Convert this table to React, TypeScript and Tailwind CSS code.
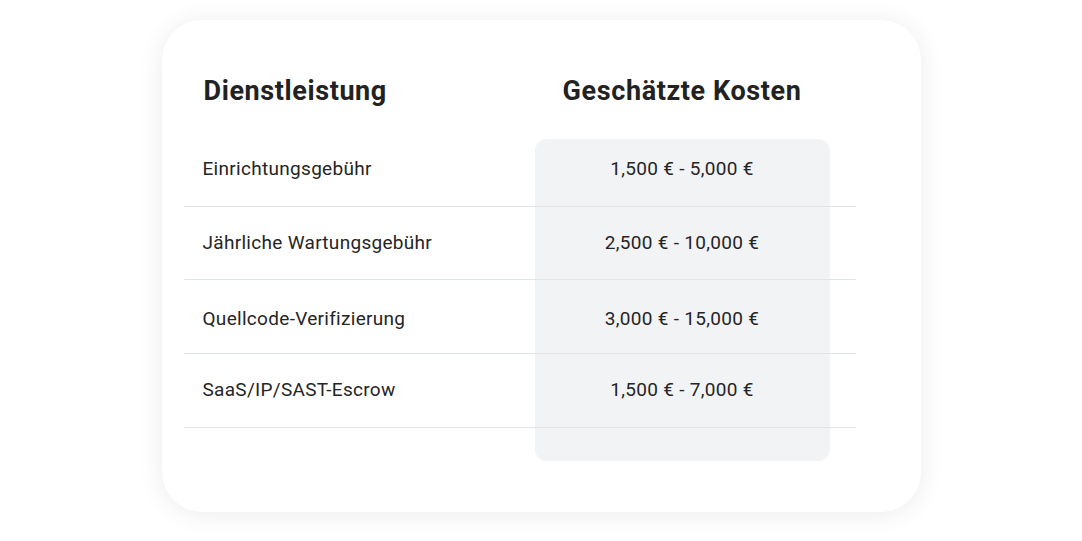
import React from 'react';

const rows = [
  { name: 'Einrichtungsgebühr', cost: '1,500 € - 5,000 €', h: 'h-[73px] pb-[2px]' },
  { name: 'Jährliche Wartungsgebühr', cost: '2,500 € - 10,000 €', h: 'h-[73px]' },
  { name: 'Quellcode-Verifizierung', cost: '3,000 € - 15,000 €', h: 'h-[74px] pt-[5px]' },
  { name: 'SaaS/IP/SAST-Escrow', cost: '1,500 € - 7,000 €', h: 'h-[74px] pb-[2px]' },
];

const rowStart = ['row-start-1', 'row-start-2', 'row-start-3', 'row-start-4'];

export default function App() {
  return (
    <div className="min-h-screen bg-white pt-[20px] font-['Roboto',sans-serif] text-[#252525]">
      <div className="mx-auto h-[492px] w-[759px] rounded-[40px] bg-white pl-[22px] pt-[55px] shadow-[0_2px_26px_rgba(0,0,0,0.08)]">
        {/* header */}
        <div className="grid grid-cols-[351px_295px_26px] text-[27px] font-bold leading-[32px] tracking-[0.6px] text-[#222]">
          <div className="pl-[20px]">Dienstleistung</div>
          <div className="text-center">Geschätzte Kosten</div>
        </div>

        {/* table */}
        <div className="mt-[27px] grid grid-cols-[351px_295px_26px] grid-rows-[auto_auto_auto_auto_33px]">
          <div className="col-start-2 row-span-5 row-start-1 mt-[5px] rounded-[12px] bg-[#f2f3f5]" />
          {rows.map((r, i) => (
            <div
              key={r.name}
              className={'col-span-3 col-start-1 grid grid-cols-[351px_295px_26px] items-center border-b border-[#dfe4e4] text-[19px] leading-[24px] tracking-[0.3px] ' + r.h + ' ' + rowStart[i]}
            >
              <div className="pl-[19px]">{r.name}</div>
              <div className="text-center">{r.cost}</div>
            </div>
          ))}
        </div>
      </div>
    </div>
  );
}
